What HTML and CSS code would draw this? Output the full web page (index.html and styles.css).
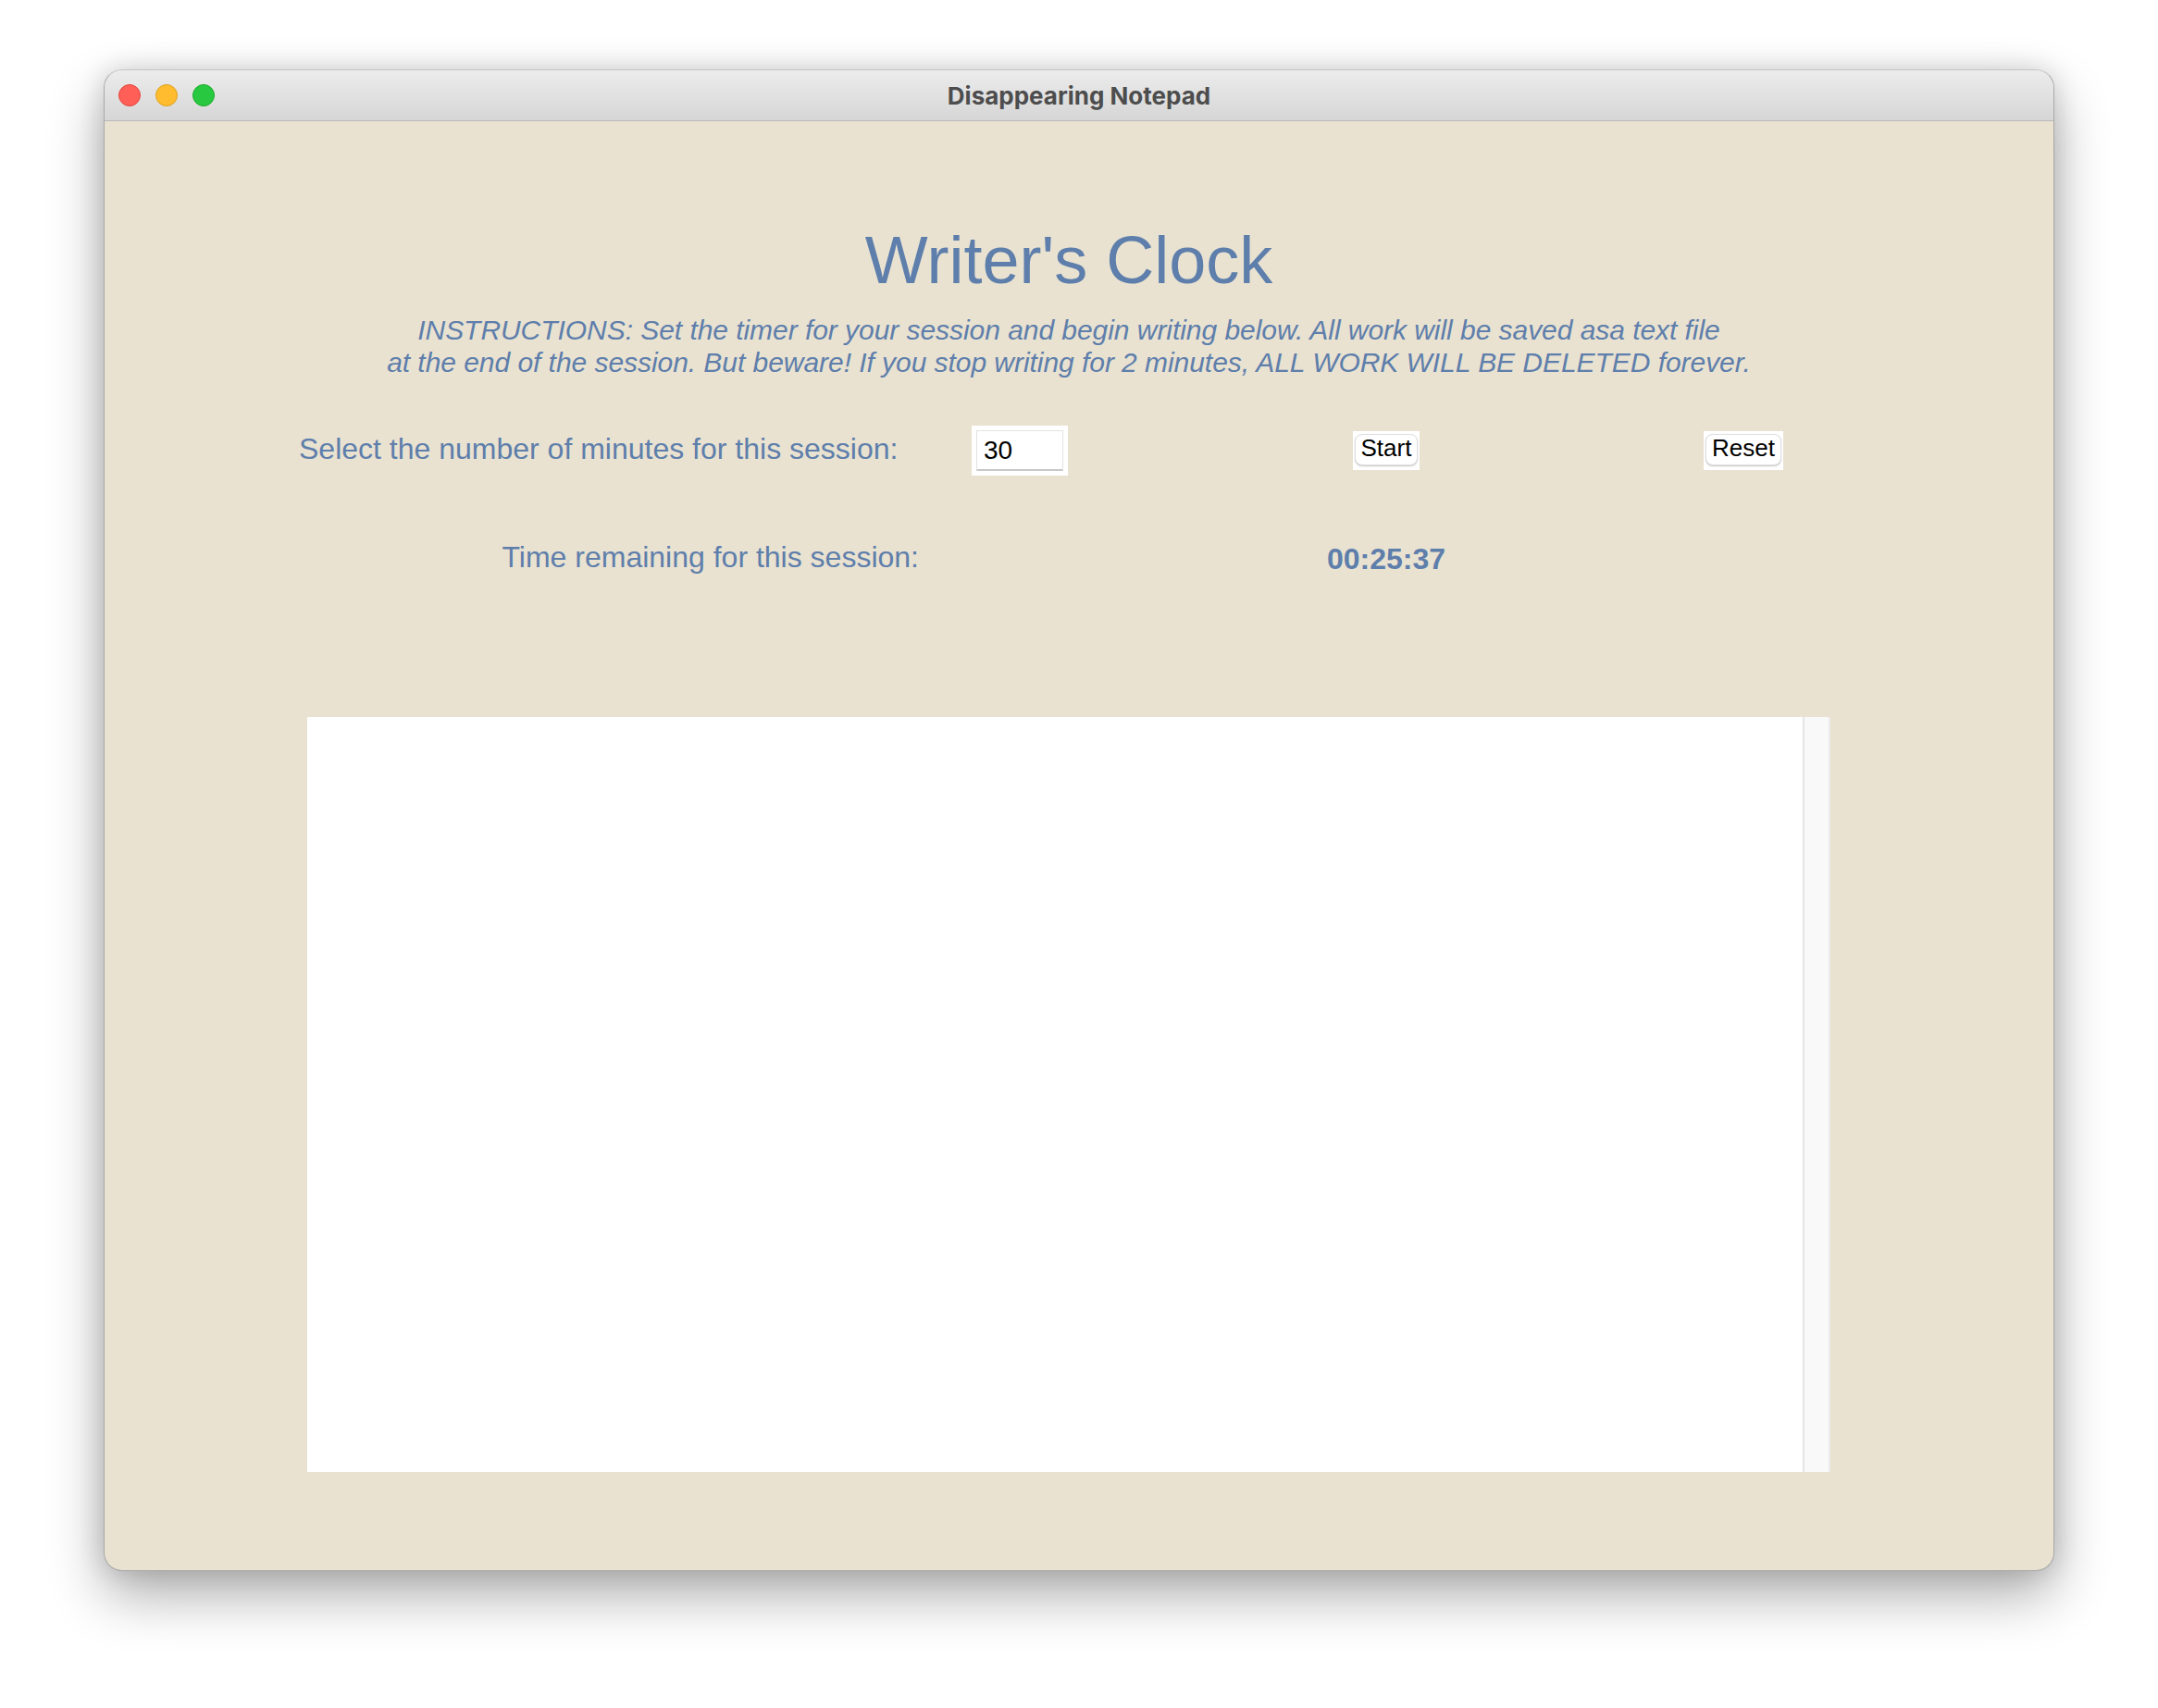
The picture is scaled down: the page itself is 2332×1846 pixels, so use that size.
FILE: index.html
```html
<!DOCTYPE html>
<html lang="en">
<head>
<meta charset="utf-8">
<title>Disappearing Notepad</title>
<link rel="stylesheet" href="styles.css">
</head>
<body>
<div class="window">
  <div class="titlebar">
    <div class="lights">
      <span class="light red"></span>
      <span class="light yellow"></span>
      <span class="light green"></span>
    </div>
    <div class="title">Disappearing Notepad</div>
  </div>
  <div class="content">
    <div class="header">
      <h1 class="heading">Writer's Clock</h1>
      <p class="instructions">INSTRUCTIONS: Set the timer for your session and begin writing below. All work will be saved asa text file<br>at the end of the session. But beware! If you stop writing for 2 minutes, ALL WORK WILL BE DELETED forever.</p>
    </div>
    <div class="controls">
      <div class="label select-label">Select the number of minutes for this session:</div>
      <div class="entry-wrap"><input class="entry" type="text" value="30"></div>
      <div class="btn-wrap"><button class="btn">Start</button></div>
      <div class="btn-wrap"><button class="btn">Reset</button></div>
      <div class="label time-label">Time remaining for this session:</div>
      <div class="spacer"></div>
      <div class="timer">00:25:37</div>
      <div class="spacer"></div>
    </div>
    <div class="editor">
      <textarea class="editor-text"></textarea>
      <div class="scrollbar"></div>
    </div>
  </div>
</div>
</body>
</html>
```
FILE: styles.css
```css
html, body {
  margin: 0;
  padding: 0;
  background: #ffffff;
}
body {
  padding: 75px 0 0 112px;
  min-height: 1846px;
  box-sizing: border-box;
}
.window {
  width: 2108px;
  box-sizing: border-box;
  border: 1px solid #a9a9a9;
  border-top-color: #c4c4c4;
  border-radius: 20px;
  overflow: hidden;
  background: #e9e2d1;
  box-shadow: 0 26px 60px rgba(0, 0, 0, 0.32), 0 0 28px rgba(0, 0, 0, 0.14);
}
.titlebar {
  height: 54px;
  border-bottom: 1px solid #b9b9b9;
  background: linear-gradient(#ececec, #d6d6d6);
  display: flex;
  align-items: center;
  justify-content: center;
  position: relative;
}
.lights {
  position: absolute;
  left: 15px;
  top: 15px;
  display: flex;
  gap: 16px;
}
.light {
  width: 24px;
  height: 24px;
  border-radius: 50%;
  box-sizing: border-box;
}
.red { background: #ff5f57; border: 1px solid #e2463f; }
.yellow { background: #febc2e; border: 1px solid #dea123; }
.green { background: #28c840; border: 1px solid #1aab29; }
.title {
  font-family: Inter, "Liberation Sans", sans-serif;
  font-weight: 700;
  font-size: 26px;
  color: #4d4d4d;
}
.content {
  padding: 114px 0 106px;
  font-family: "Liberation Sans", Arial, sans-serif;
  color: #5e7eab;
}
.header {
  width: 1646px;
  margin-left: 219px;
  text-align: center;
}
.heading {
  margin: 0;
  font-weight: 400;
  font-size: 72px;
  line-height: 72px;
  color: #5e7eab;
}
.instructions {
  margin: 22px 0 0;
  font-style: italic;
  font-size: 30px;
  line-height: 35px;
  letter-spacing: -0.05px;
}
.controls {
  margin: 51px 0 0 210px;
  display: grid;
  grid-template-columns: 670px 218px 574px 198px;
  grid-template-rows: 54px 37px;
  row-gap: 70px;
  align-items: center;
  justify-items: center;
}
.label {
  font-size: 32px;
  line-height: 37px;
}
.select-label {
  justify-self: start;
  padding-bottom: 4px;
}
.time-label { justify-self: end; }
.entry-wrap {
  background: #fff;
  padding: 5px;
}
.entry {
  display: block;
  width: 94px;
  height: 44px;
  box-sizing: border-box;
  border: 1px solid #e3e3e3;
  border-bottom: 2px solid #c8c8c8;
  outline: none;
  background: #fff;
  font-family: "Liberation Sans", Arial, sans-serif;
  font-size: 28px;
  color: #000;
  padding: 0 0 0 7px;
  margin: 0;
}
.btn-wrap {
  background: #fff;
  padding: 3px 2px 5px;
}
.btn {
  display: block;
  height: 34px;
  margin: 0;
  padding: 0 6px 3px;
  border: 1px solid #dedede;
  border-radius: 8px;
  background: #fff;
  box-shadow: 0 1px 1.5px rgba(0, 0, 0, 0.22);
  font-family: "Liberation Sans", Arial, sans-serif;
  font-size: 26px;
  line-height: 29px;
  color: #000;
}
.timer {
  font-size: 32px;
  font-weight: 700;
  line-height: 37px;
  padding-top: 3px;
}
.editor {
  margin: 154px 0 0 219px;
  width: 1646px;
  height: 816px;
  display: flex;
}
.editor-text {
  flex: 1;
  height: 100%;
  margin: 0;
  border: none;
  outline: none;
  resize: none;
  background: #fff;
  box-sizing: border-box;
}
.scrollbar {
  width: 30px;
  box-sizing: border-box;
  background: #f9f9f9;
  border-left: 2px solid #e6e6e6;
  border-right: 2px solid #ececec;
}
```
